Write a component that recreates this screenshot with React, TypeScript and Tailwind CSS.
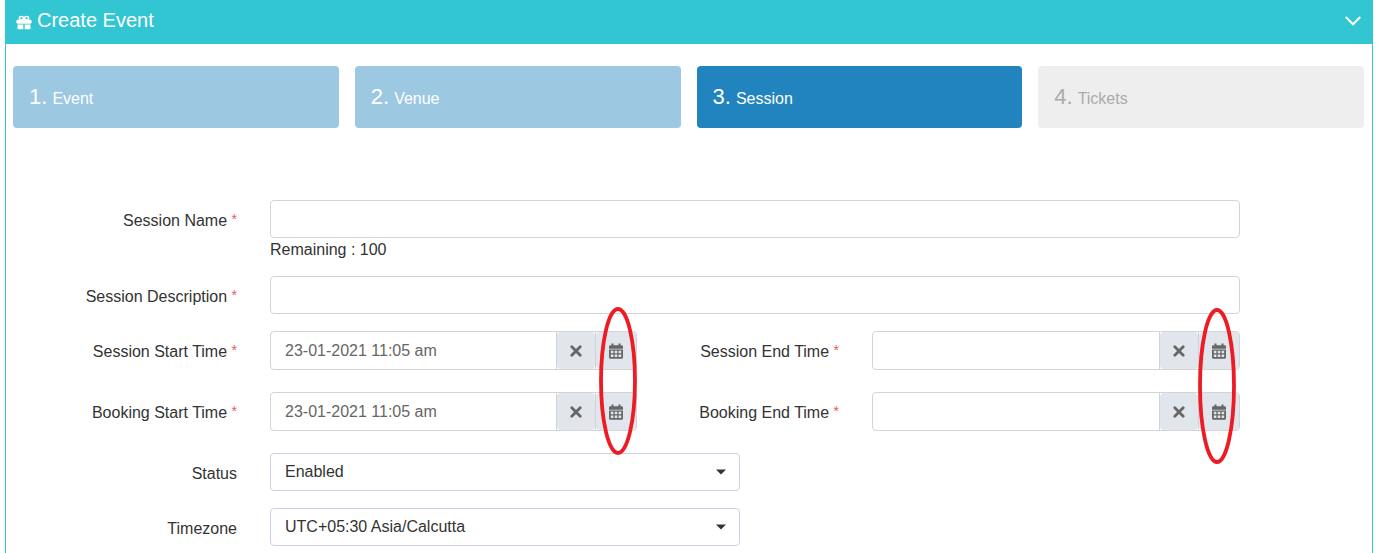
import React, { useState } from "react";

const steps = [
  { n: 1, name: "Event", style: "bg-[#9dc8e2] text-white" },
  { n: 2, name: "Venue", style: "bg-[#9dc8e2] text-white" },
  { n: 3, name: "Session", style: "bg-[#2184be] text-white" },
  { n: 4, name: "Tickets", style: "bg-[#eeeeee] text-[#aaaaaa]" },
];

function GiftIcon() {
  return (
    <svg className="mt-1 h-4 w-4" viewBox="0 0 16 16" fill="currentColor" aria-hidden="true">
      <rect x="0.4" y="5.8" width="15.2" height="3.9" rx="1.4" />
      <path d="M1.500 10.400h5.800v4.900H2.500a1 1 0 0 1-1-1zM8.700 10.400h5.800v3.900a1 1 0 0 1-1 1H8.700z" />
      <g fill="none" stroke="currentColor" strokeWidth="1.400">
        <ellipse cx="5.400" cy="4.200" rx="2" ry="1.700" />
        <ellipse cx="10.600" cy="4.200" rx="2" ry="1.700" />
        <path d="M6.800 5L8 6L9.200 5" />
      </g>
    </svg>
  );
}

function TimesIcon() {
  return (
    <svg className="h-3 w-3" viewBox="0 0 12 12" stroke="currentColor" strokeWidth="2.8" strokeLinecap="round" aria-hidden="true">
      <path d="M1.800 1.800L10.200 10.200M10.200 1.800L1.800 10.200" />
    </svg>
  );
}

function CalendarIcon() {
  return (
    <svg className="h-4 w-[14px]" viewBox="0 0 14 16" fill="currentColor" aria-hidden="true">
      <path
        fillRule="evenodd"
        d="M2.500 0.500h2v1.700h5V0.500h2v1.700h1.100A1.400 1.400 0 0 1 14 3.600V5.800H0V3.600A1.400 1.400 0 0 1 1.400 2.200H2.500zM0 6.400h14v8A1.400 1.400 0 0 1 12.600 15.800H1.400A1.400 1.400 0 0 1 0 14.400zM1.800 7.800v2.400h2.600V7.800zM5.700 7.800v2.400h2.600V7.800zM9.600 7.800v2.400h2.600V7.800zM1.800 11.600v2.400h2.600v-2.400zM5.700 11.600v2.400h2.600v-2.400zM9.600 11.600v2.400h2.600v-2.400z"
      />
    </svg>
  );
}

function Label({ id, required, children }: { id: string; required?: boolean; children: React.ReactNode }) {
  return (
    <label htmlFor={id} className="mt-[9px] whitespace-nowrap text-right text-base leading-6">
      {children}
      {required && (
        <>
          {" "}
          <span className="align-[2px] text-sm leading-none text-[#f0555f]">*</span>
        </>
      )}
    </label>
  );
}

const box = "w-full rounded border border-[#d2d4d8] bg-white";
const addon = "flex items-center justify-center rounded bg-[#e1e5ec] text-[#666666]";

function DateField({ id, initial = "", name }: { id: string; initial?: string; name: string }) {
  const [value, setValue] = useState(initial);
  return (
    <div className={`${box} flex h-[39px]`}>
      <input
        id={id}
        value={value}
        onChange={(e) => setValue(e.target.value)}
        className="min-w-0 flex-1 px-[14px] text-base text-[#666666] outline-none"
      />
      <div className="flex border-l border-[#cfd2d6]">
        <button
          type="button"
          aria-label={`Clear ${name}`}
          onClick={() => setValue("")}
          className={`${addon} w-[38px]`}
        >
          <TimesIcon />
        </button>
      </div>
      <div className="flex border-l border-[#cfd2d6]">
        <button type="button" aria-label={`Pick ${name}`} className={`${addon} w-10`}>
          <CalendarIcon />
        </button>
      </div>
    </div>
  );
}

function SelectField({ id, option }: { id: string; option: string }) {
  return (
    <div className="relative col-span-2 mr-[99px]">
      <select
        id={id}
        className="h-[38px] w-full appearance-none rounded border border-[#c9d0e0] bg-white px-[14px] text-[#333333]"
      >
        <option>{option}</option>
      </select>
      <svg
        className="pointer-events-none absolute right-[14px] top-4 h-[6px] w-[10px]"
        viewBox="0 0 10 6"
        fill="#333333"
        aria-hidden="true"
      >
        <path d="M0 0.500H10L5 5.500Z" />
      </svg>
    </div>
  );
}

const row = "grid grid-cols-[231fr_367fr_169fr_368fr_99fr] gap-x-[33px]";

export default function App() {
  return (
    <main className="mx-[5px] min-h-screen border-x border-[#32c5d2] bg-white font-['Liberation_Sans',Arial,sans-serif] text-[#333333]">
      <header className="flex h-11 items-center justify-between bg-[#32c5d2] pl-[10px] pr-[11px] text-white">
        <h1 className="flex items-center gap-[5px] pb-1 text-xl leading-6">
          <GiftIcon />
          Create Event
        </h1>
        <button type="button" aria-label="Collapse" className="pb-[2px]">
          <svg className="h-[10px] w-4" viewBox="0 0 16 10" fill="none" stroke="currentColor" strokeWidth="2" aria-hidden="true">
            <path d="M0.700 1L8 8.300L15.300 1" />
          </svg>
        </button>
      </header>

      <ol className="ml-[7px] mr-2 mt-[22px] grid grid-cols-4 gap-4">
        {steps.map((s) => (
          <li key={s.n} className={`${s.style} flex h-[62px] items-center rounded px-4`}>
            <span className="text-[22px] leading-8">{s.n}.</span>
            <span className="ml-[5px] mt-1 text-base">{s.name}</span>
          </li>
        ))}
      </ol>

      <form className="mt-[72px]" onSubmit={(e) => e.preventDefault()}>
        <div className={row}>
          <Label id="name" required>Session Name</Label>
          <div className="col-span-3">
            <input id="name" maxLength={100} className={`${box} block h-[38px] px-[14px]`} />
            <p className="text-base leading-6">Remaining : 100</p>
          </div>
        </div>
        <div className={`${row} mt-[14px]`}>
          <Label id="description" required>Session Description</Label>
          <div className="col-span-3">
            <input id="description" className={`${box} block h-[38px] px-[14px]`} />
          </div>
        </div>
        <div className={`${row} mt-[17px]`}>
          <Label id="sstart" required>Session Start Time</Label>
          <div className="relative">
            <DateField id="sstart" name="session start time" initial="23-01-2021 11:05 am" />
            <svg className="pointer-events-none absolute -top-6 right-0 z-10 h-[148px] w-[38px]" viewBox="0 0 38 148" aria-hidden="true">
              <ellipse cx="19" cy="74" rx="17" ry="72" fill="none" stroke="#ed1c24" strokeWidth="3.800" />
            </svg>
          </div>
          <Label id="send" required>Session End Time</Label>
          <div className="relative">
            <DateField id="send" name="session end time" />
            <svg className="pointer-events-none absolute -top-6 right-1 z-10 h-[157px] w-[38px]" viewBox="0 0 38 157" aria-hidden="true">
              <ellipse cx="19" cy="79" rx="17" ry="76" fill="none" stroke="#ed1c24" strokeWidth="3.800" />
            </svg>
          </div>
        </div>
        <div className={`${row} mt-[22px]`}>
          <Label id="bstart" required>Booking Start Time</Label>
          <DateField id="bstart" name="booking start time" initial="23-01-2021 11:05 am" />
          <Label id="bend" required>Booking End Time</Label>
          <DateField id="bend" name="booking end time" />
        </div>
        <div className={`${row} mt-[22px]`}>
          <Label id="status">Status</Label>
          <SelectField id="status" option="Enabled" />
        </div>
        <div className={`${row} mt-[17px]`}>
          <Label id="timezone">Timezone</Label>
          <SelectField id="timezone" option="UTC+05:30 Asia/Calcutta" />
        </div>
      </form>
    </main>
  );
}
